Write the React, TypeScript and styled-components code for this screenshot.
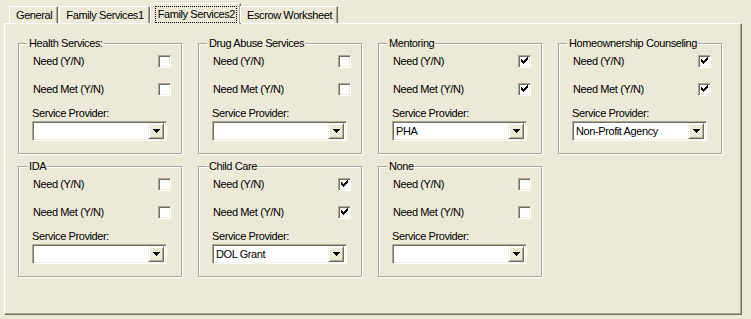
import styled, { createGlobalStyle } from "styled-components"

const GlobalStyle = createGlobalStyle`
    html, body {
        margin: 0;
        padding: 0;
        background: #ECE9D8;
        font-family: "Liberation Sans", Arial, sans-serif;
        font-size: 11px;
        letter-spacing: -0.4px;
        color: #000;
    }
`

interface ServiceData {
    title: string
    need: boolean
    needMet: boolean
    provider: string
}

const services: ServiceData[] = [
    { title: "Health Services:", need: false, needMet: false, provider: "" },
    { title: "Drug Abuse Services", need: false, needMet: false, provider: "" },
    { title: "Mentoring", need: true, needMet: true, provider: "PHA" },
    { title: "Homeownership Counseling", need: true, needMet: true, provider: "Non-Profit Agency" },
    { title: "IDA", need: false, needMet: false, provider: "" },
    { title: "Child Care", need: true, needMet: true, provider: "DOL Grant" },
    { title: "None", need: false, needMet: false, provider: "" },
]

const tabs = ["General", "Family Services1", "Family Services2", "Escrow Worksheet"]

function CheckBox({ checked }: { checked: boolean }) {
    return (
        <Check>
            {checked && (
                <svg width="9" height="9" viewBox="0 0 9 9" shapeRendering="crispEdges">
                    <path d="M1 2h1v3h-1zM2 3h1v3h-1zM3 4h1v3h-1zM4 3h1v3h-1zM5 2h1v3h-1zM6 1h1v3h-1zM7 0h1v3h-1z" fill="#000" />
                </svg>
            )}
        </Check>
    )
}

function ComboBox({ value }: { value: string }) {
    return (
        <Combo>
            <ComboText>{value}</ComboText>
            <DropButton>
                <svg width="7" height="4" viewBox="0 0 7 4" shapeRendering="crispEdges">
                    <path d="M0 0h7v1h-7zM1 1h5v1h-5zM2 2h3v1h-3zM3 3h1v1h-1z" fill="#000" />
                </svg>
            </DropButton>
        </Combo>
    )
}

function ServiceGroup({ data }: { data: ServiceData }) {
    return (
        <Group>
            <Legend>{data.title}</Legend>
            <Row>
                <span>Need (Y/N)</span>
                <CheckBox checked={data.need} />
            </Row>
            <Row $gap>
                <span>Need Met (Y/N)</span>
                <CheckBox checked={data.needMet} />
            </Row>
            <ProviderLabel>Service Provider:</ProviderLabel>
            <ComboBox value={data.provider} />
        </Group>
    )
}

function App() {
    return (
        <>
            <GlobalStyle />
            <Window>
                <TabStrip>
                    {tabs.map((t, i) => (
                        <Tab key={t} $active={i === 2}>
                            <TabLabel $active={i === 2}>{t}</TabLabel>
                        </Tab>
                    ))}
                </TabStrip>
                <Panel>
                    <GroupGrid>
                        {services.map((s) => (
                            <ServiceGroup key={s.title} data={s} />
                        ))}
                    </GroupGrid>
                </Panel>
            </Window>
        </>
    )
}

export default App

const Window = styled.div`
    width: 751px;
    height: 319px;
    padding-left: 4px;
    box-sizing: border-box;
`
const TabStrip = styled.div`
    display: flex;
    align-items: flex-end;
    height: 23px;
    padding-left: 5px;
    position: relative;
    z-index: 1;
`
const Tab = styled.div<{ $active?: boolean }>`
    display: flex;
    align-items: center;
    box-sizing: border-box;
    height: ${(p) => (p.$active ? "21px" : "17px")};
    margin: ${(p) => (p.$active ? "0 -1px -1px -1px" : "0 1px 0 0")};
    padding: ${(p) => (p.$active ? "1px 3px 0 4px" : "1px 3px 0 3px")};
    background: #ECE9D8;
    border-top: 1px solid #fff;
    border-left: 1px solid #fff;
    border-right: 1px solid #716F64;
    box-shadow: inset -1px 0 0 #ACA899;
    white-space: nowrap;
`
const TabLabel = styled.span<{ $active?: boolean }>`
    padding: 1px 1px 1px 2px;
    border: 1px dotted ${(p) => (p.$active ? "#000" : "transparent")};
    line-height: 13px;
`
const Panel = styled.div`
    width: 738px;
    height: 292px;
    box-sizing: border-box;
    border-top: 1px solid #fff;
    border-left: 1px solid #fff;
    border-right: 1px solid #716F64;
    border-bottom: 1px solid #716F64;
    box-shadow: inset -1px -1px 0 #ACA899;
    padding: 19px 0 0 13px;
`
const GroupGrid = styled.div`
    display: grid;
    grid-template-columns: repeat(4, 164px);
    column-gap: 16px;
    row-gap: 12px;
    align-items: start;
`
const Group = styled.div`
    position: relative;
    height: 111px;
    box-sizing: border-box;
    border: 1px solid #ACA899;
    box-shadow: inset 1px 1px 0 #fff, 1px 1px 0 #fff;
    padding: 11px 13px 0 13px;
`
const Legend = styled.span`
    position: absolute;
    top: -7px;
    left: 8px;
    padding: 0 1px 0 2px;
    background: #ECE9D8;
    line-height: 13px;
    white-space: nowrap;
`
const Row = styled.div<{ $gap?: boolean }>`
    display: flex;
    align-items: center;
    justify-content: space-between;
    height: 13px;
    margin-top: ${(p) => (p.$gap ? "15px" : "0")};
    margin-right: -3px;
    padding-left: 1px;
    line-height: 13px;
`
const Check = styled.div`
    width: 13px;
    height: 13px;
    box-sizing: border-box;
    background: #fff;
    border-top: 1px solid #ACA899;
    border-left: 1px solid #ACA899;
    border-right: 1px solid #fff;
    border-bottom: 1px solid #fff;
    box-shadow: inset 1px 1px 0 #716F64, inset -1px -1px 0 #F1EFE2;
    display: flex;
    align-items: center;
    justify-content: center;
`
const ProviderLabel = styled.div`
    margin-top: 11px;
    line-height: 13px;
`
const Combo = styled.div`
    margin-top: 1px;
    width: 135px;
    height: 20px;
    box-sizing: border-box;
    display: flex;
    background: #fff;
    border-top: 1px solid #ACA899;
    border-left: 1px solid #ACA899;
    border-right: 1px solid #fff;
    border-bottom: 1px solid #fff;
    box-shadow: inset 1px 1px 0 #716F64, inset -1px -1px 0 #F1EFE2;
    padding: 2px 2px 2px 2px;
`
const ComboText = styled.div`
    flex: 1;
    line-height: 15px;
    padding-left: 1px;
    white-space: nowrap;
    overflow: hidden;
`
const DropButton = styled.div`
    width: 16px;
    height: 16px;
    margin-top: -1px;
    box-sizing: border-box;
    background: #ECE9D8;
    border-top: 1px solid #F1EFE2;
    border-left: 1px solid #F1EFE2;
    border-right: 1px solid #716F64;
    border-bottom: 1px solid #716F64;
    box-shadow: inset 1px 1px 0 #fff, inset -1px -1px 0 #ACA899;
    display: flex;
    align-items: center;
    justify-content: center;
`
